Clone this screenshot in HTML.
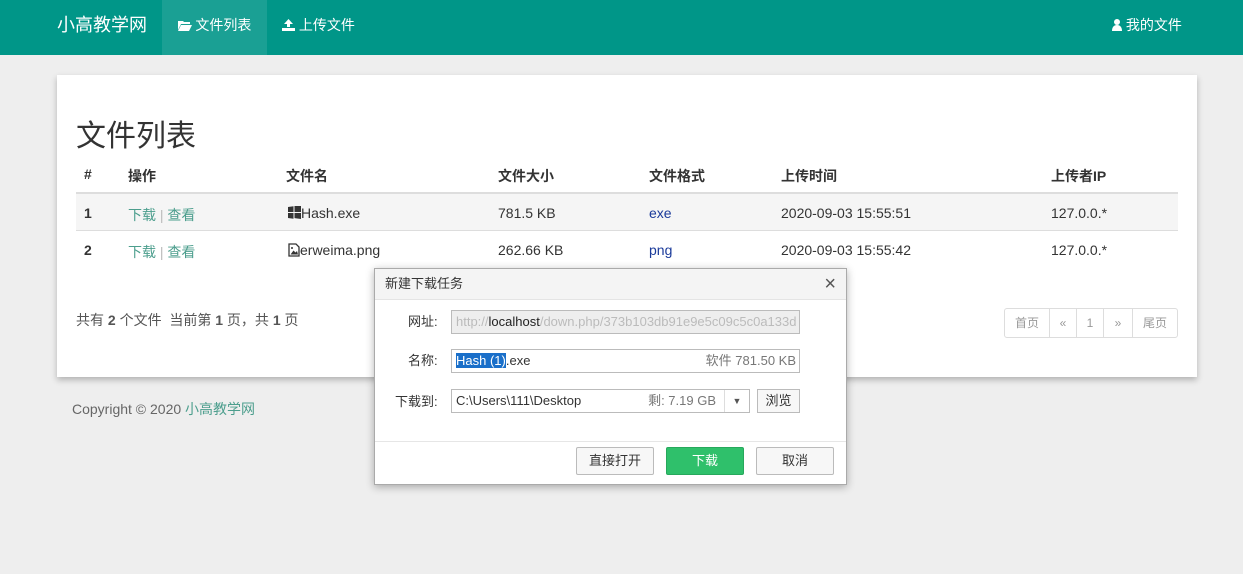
<!DOCTYPE html><html><head><meta charset="utf-8"><style>
*{margin:0;padding:0;box-sizing:border-box}
body{width:1243px;height:574px;background:#eeeeee;font-family:"Liberation Sans","Noto Sans CJK SC",sans-serif;font-size:14px;color:#333;position:relative;overflow:hidden}
.nav{position:absolute;left:0;top:0;width:1243px;height:55px;background:#009688;color:#fff}
.nav span{position:absolute;top:0;height:55px;line-height:50px}
.panel{position:absolute;left:57px;top:75px;width:1140px;height:302px;background:#fff;box-shadow:0 3px 6px rgba(0,0,0,.25)}
.a{position:absolute;white-space:nowrap}
.g{color:#4c9e8d}
.b{font-weight:bold}
.dlg{position:absolute;left:374px;top:268px;width:473px;height:217px;background:#fff;border:1px solid #aaa;box-shadow:0 2px 8px rgba(0,0,0,.3);font-size:13px}
.inp{position:absolute;left:76px;width:349px;height:24px;border:1px solid #bbb;line-height:22px;padding-left:4px}
.btn{position:absolute;top:178px;width:78px;height:28px;border:1px solid #bbb;background:#f7f7f7;text-align:center;line-height:26px;border-radius:2px}
.pg{position:absolute;top:308px;height:30px;border:1px solid #ddd;color:#999;font-size:12px;line-height:28px;text-align:center}
</style></head><body>
<div class="nav">
<span style="left:57px;font-size:18px;line-height:50px">小高教学网</span>
<span style="left:162px;width:105px;background:#1aa094;text-align:center;font-size:14px"><svg width="14" height="11" viewBox="0 0 14 11" style="vertical-align:-1px"><path d="M0 1h5l1 1h6v2H3L0 10z M3 5h11l-3 6H0z" fill="#fff"/></svg> 文件列表</span>
<span style="left:282px;font-size:14px"><svg width="13" height="12" viewBox="0 0 13 12" style="vertical-align:-1px"><path d="M6.5 0L11 5H8v3H5V5H2z M0 9h13v3H0z" fill="#fff"/></svg> 上传文件</span>
<span style="left:1112px;font-size:14px"><svg width="10" height="12" viewBox="0 0 10 12" style="vertical-align:-1px"><circle cx="5" cy="3" r="3" fill="#fff"/><path d="M0 12c0-4 2-6 5-6s5 2 5 6z" fill="#fff"/></svg> 我的文件</span>
</div>
<div class="panel">
<div class="a" style="left:19px;top:36px;font-size:30px;color:#333">文件列表</div>
<div class="a b" style="left:27px;top:91px">#</div>
<div class="a b" style="left:71px;top:91px">操作</div>
<div class="a b" style="left:229px;top:91px">文件名</div>
<div class="a b" style="left:441px;top:91px">文件大小</div>
<div class="a b" style="left:592px;top:91px">文件格式</div>
<div class="a b" style="left:724px;top:91px">上传时间</div>
<div class="a b" style="left:994px;top:91px">上传者IP</div>
<div class="a" style="left:19px;top:117px;width:1102px;height:2px;background:#ddd"></div>
<div class="a" style="left:19px;top:119px;width:1102px;height:37px;background:#f5f5f5;border-bottom:1px solid #ddd"></div>
<div class="a b" style="left:27px;top:130px">1</div>
<div class="a g" style="left:71px;top:130px">下载 <span style="color:#bbb">|</span> 查看</div>
<div class="a" style="left:231px;top:130px"><svg width="13" height="13" viewBox="0 0 13 13" style="vertical-align:-1px"><path d="M0 1l5.5-.8V6H0z M6.5 0L13 -1V6H6.5z M0 7h5.5v5.8L0 12z M6.5 7H13v6l-6.5-.9z" fill="#333"/></svg>Hash.exe</div>
<div class="a" style="left:441px;top:130px">781.5 KB</div>
<div class="a" style="left:592px;top:130px;color:#1a3a9a">exe</div>
<div class="a" style="left:724px;top:130px">2020-09-03 15:55:51</div>
<div class="a" style="left:994px;top:130px">127.0.0.*</div>
<div class="a b" style="left:27px;top:167px">2</div>
<div class="a g" style="left:71px;top:167px">下载 <span style="color:#bbb">|</span> 查看</div>
<div class="a" style="left:231px;top:167px"><svg width="12" height="14" viewBox="0 0 12 14" style="vertical-align:-2px"><path d="M1 1h7l3 3v9H1z" fill="none" stroke="#333" stroke-width="1.3"/><path d="M2.5 11.5l3-4 2 2 1.5-1.5 1 3.5z" fill="#333"/><circle cx="4" cy="5" r="1" fill="#333"/></svg>erweima.png</div>
<div class="a" style="left:441px;top:167px">262.66 KB</div>
<div class="a" style="left:592px;top:167px;color:#1a3a9a">png</div>
<div class="a" style="left:724px;top:167px">2020-09-03 15:55:42</div>
<div class="a" style="left:994px;top:167px">127.0.0.*</div>
<div class="a" style="left:19px;top:235px;color:#555">共有 <b>2</b> 个文件 &nbsp;当前第 <b>1</b> 页，共 <b>1</b> 页</div>
</div>
<div class="pg" style="left:1004px;width:46px;border-radius:3px 0 0 3px">首页</div>
<div class="pg" style="left:1049px;width:28px">«</div>
<div class="pg" style="left:1076px;width:28px">1</div>
<div class="pg" style="left:1103px;width:30px">»</div>
<div class="pg" style="left:1132px;width:46px;border-radius:0 3px 3px 0">尾页</div>
<div class="a" style="left:72px;top:399px;color:#666">Copyright © 2020 <span class="g">小高教学网</span></div>
<div class="dlg">
<div style="height:31px;background:#f4f4f4;border-bottom:1px solid #e4e4e4;line-height:30px;padding-left:10px">新建下载任务<span style="position:absolute;right:10px;top:0;font-size:20px;color:#555">×</span></div>
<div class="a" style="left:33px;top:42px">网址:</div>
<div class="inp" style="top:41px;background:#eee;color:#bbb;overflow:hidden;white-space:nowrap">http://<span style="color:#222">localhost</span>/down.php/373b103db91e9e5c09c5c0a133d</div>
<div class="a" style="left:33px;top:81px">名称:</div>
<div class="inp" style="top:80px"><span style="background:#1a6fc9;color:#fff">Hash (1)</span>.exe<span style="position:absolute;right:3px;color:#777">软件 781.50 KB</span></div>
<div class="a" style="left:20px;top:122px">下载到:</div>
<div class="inp" style="top:120px;width:299px;color:#333">C:\Users\111\Desktop<span style="position:absolute;right:33px;color:#777">剩: 7.19 GB</span><span style="position:absolute;right:0;top:0;width:25px;height:22px;border-left:1px solid #ddd;text-align:center;font-size:9px;color:#555">▼</span></div>
<div class="a" style="left:382px;top:120px;width:43px;height:24px;border:1px solid #bbb;background:#f7f7f7;text-align:center;line-height:22px">浏览</div>
<div class="a" style="left:0;top:172px;width:471px;height:1px;background:#e6e6e6"></div>
<div class="btn" style="left:201px">直接打开</div>
<div class="btn" style="left:291px;background:#2fc06b;border-color:#27a85c;color:#fff">下载</div>
<div class="btn" style="left:381px">取消</div>
</div>
</body></html>
